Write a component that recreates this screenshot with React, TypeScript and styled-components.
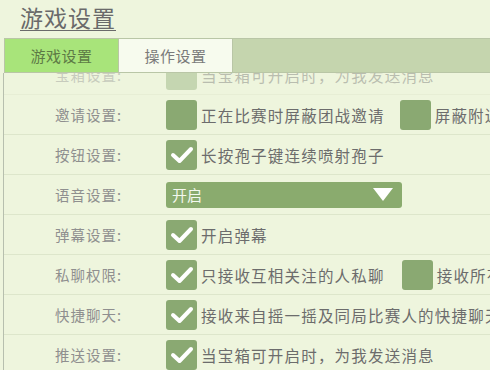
import React from "react";
import styled, { createGlobalStyle } from "styled-components";

const Global = createGlobalStyle`
  html, body { margin: 0; padding: 0; background: #eef5dd; }
  body { font-family: "Noto Sans CJK SC", "Noto Sans", sans-serif; }
`;

const Page = styled.div`
  width: 490px;
  height: 370px;
  overflow: hidden;
  background: #eef5dd;
  display: flex;
  flex-direction: column;
`;

const Title = styled.h1`
  margin: 0;
  height: 38px;
  padding: 0 0 0 20px;
  font-size: 23px;
  line-height: 35px;
  font-weight: 400;
  color: #6a6a6a;
  letter-spacing: 1px;
  text-decoration: underline;
  text-decoration-thickness: 1px;
  text-underline-offset: 3px;
`;

const TabBar = styled.div`
  display: flex;
  height: 33px;
  margin-left: 4px;
  border: 1px solid #b9c6a6;
  border-right: none;
  background: #c5d5ae;
  flex-shrink: 0;
`;

const Tab = styled.div<{ $active?: boolean }>`
  width: 113px;
  display: flex;
  align-items: center;
  justify-content: center;
  font-size: 15px;
  letter-spacing: 0.5px;
  color: ${(p) => (p.$active ? "#5d7a45" : "#7a7a7a")};
  background: ${(p) => (p.$active ? "#a8e47a" : "#f7fbee")};
  border-right: 1px solid #b9c6a6;
`;

const Panel = styled.div`
  flex: 1;
  margin-left: 3px;
  border-left: 1px solid #b7bfae;
  overflow: hidden;
  display: flex;
  flex-direction: column;
`;

const Row = styled.div<{ $faded?: boolean; $clip?: number }>`
  display: flex;
  align-items: center;
  height: 39px;
  flex-shrink: 0;
  overflow: hidden;
  margin-top: ${(p) => (p.$clip ? `-${p.$clip}px` : "0")};
  border-bottom: 1px solid #dde6cb;
  opacity: ${(p) => (p.$faded ? 0.4 : 1)};
`;

const Label = styled.div`
  width: 118px;
  flex-shrink: 0;
  text-align: right;
  margin-right: 44px;
  font-size: 14.5px;
  letter-spacing: 1px;
  color: #8f8f8f;
  white-space: nowrap;
`;

const Box = styled.div`
  width: 31px;
  height: 30px;
  border-radius: 3px;
  background: #8aa972;
  flex-shrink: 0;
  display: flex;
  align-items: center;
  justify-content: center;
`;

const Text = styled.span`
  margin-left: 4px;
  flex-shrink: 0;
  font-size: 15.5px;
  letter-spacing: 1.2px;
  color: #6c6c6c;
  white-space: nowrap;
`;

const Spacer = styled.div<{ $w: number }>`
  width: ${(p) => p.$w}px;
  flex-shrink: 0;
`;

const Select = styled.div`
  width: 236px;
  height: 26px;
  flex-shrink: 0;
  border-radius: 3px;
  background: #8aab6e;
  display: flex;
  align-items: center;
  justify-content: space-between;
  padding: 0 9px 0 6px;
  box-sizing: border-box;
  color: #f4f8ee;
  font-size: 15px;
`;

const Check = () => (
  <svg width="24" height="20" viewBox="0 0 24 20">
    <polyline
      points="3,10 9.5,16 21,4"
      fill="none"
      stroke="#ffffff"
      strokeWidth="4"
      strokeLinecap="round"
      strokeLinejoin="round"
    />
  </svg>
);

const Triangle = () => (
  <svg width="20" height="13" viewBox="0 0 20 13">
    <polygon points="0,0 20,0 10,13" fill="#ffffff" />
  </svg>
);

const CheckItem = ({ checked, text }: { checked: boolean; text: string }) => (
  <>
    <Box>{checked && <Check />}</Box>
    <Text>{text}</Text>
  </>
);

export default function App() {
  return (
    <>
      <Global />
      <Page>
        <Title>游戏设置</Title>
        <TabBar>
          <Tab $active>游戏设置</Tab>
          <Tab>操作设置</Tab>
        </TabBar>
        <Panel>
          <Row $faded $clip={18}>
            <Label>宝箱设置:</Label>
            <CheckItem checked={false} text="当宝箱可开启时，为我发送消息" />
          </Row>
          <Row>
            <Label>邀请设置:</Label>
            <CheckItem checked={false} text="正在比赛时屏蔽团战邀请" />
            <Spacer $w={15} />
            <CheckItem checked={false} text="屏蔽附近的人邀请" />
          </Row>
          <Row>
            <Label>按钮设置:</Label>
            <CheckItem checked text="长按孢子键连续喷射孢子" />
          </Row>
          <Row>
            <Label>语音设置:</Label>
            <Select>
              <span>开启</span>
              <Triangle />
            </Select>
          </Row>
          <Row>
            <Label>弹幕设置:</Label>
            <CheckItem checked text="开启弹幕" />
          </Row>
          <Row>
            <Label>私聊权限:</Label>
            <CheckItem checked text="只接收互相关注的人私聊" />
            <Spacer $w={17} />
            <CheckItem checked={false} text="接收所有人私聊" />
          </Row>
          <Row>
            <Label>快捷聊天:</Label>
            <CheckItem checked text="接收来自摇一摇及同局比赛人的快捷聊天" />
          </Row>
          <Row>
            <Label>推送设置:</Label>
            <CheckItem checked text="当宝箱可开启时，为我发送消息" />
          </Row>
        </Panel>
      </Page>
    </>
  );
}
